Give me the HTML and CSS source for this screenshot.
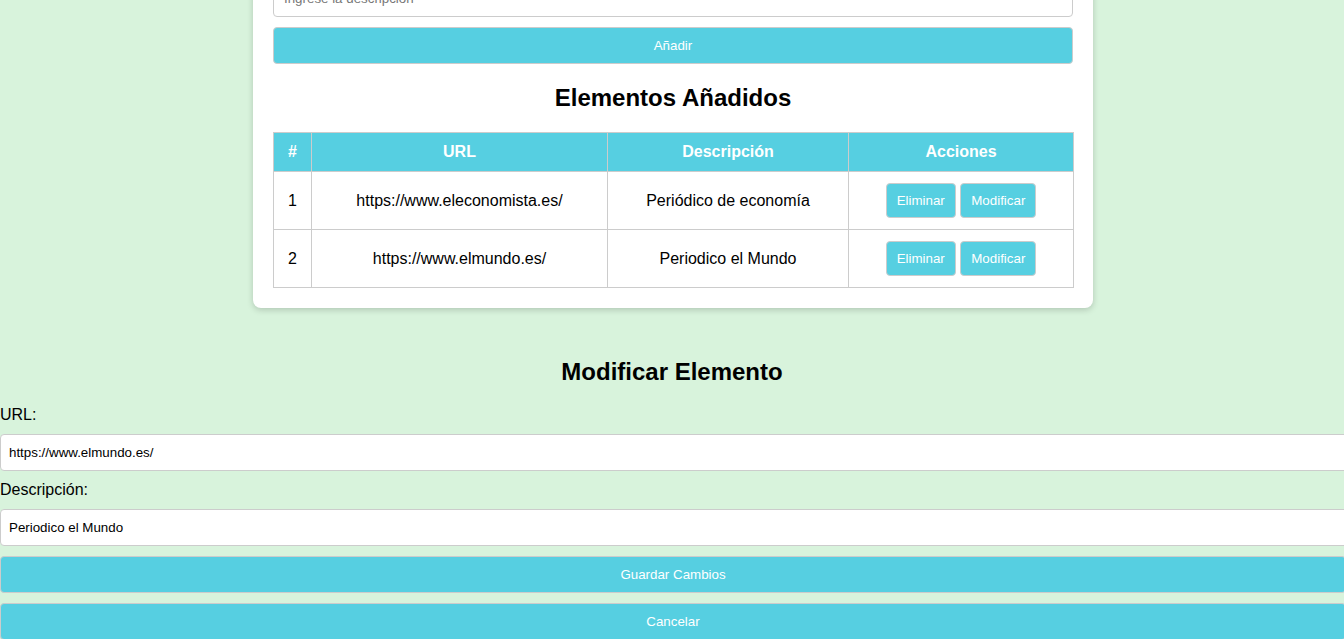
FILE: index.html
```html
<!DOCTYPE html>
<html lang="es">
<head>
<meta charset="utf-8">
<title>Elementos</title>
<link rel="stylesheet" href="styles.css">
</head>
<body>
<main class="page">
  <section class="card">
    <input class="field" type="text" placeholder="Ingrese la descripción">
    <button class="btn btn-block" type="button">Añadir</button>
    <h2 class="title">Elementos Añadidos</h2>
    <table class="items">
      <colgroup>
        <col class="c-num">
        <col class="c-url">
        <col class="c-desc">
        <col class="c-act">
      </colgroup>
      <thead>
        <tr><th>#</th><th>URL</th><th>Descripción</th><th>Acciones</th></tr>
      </thead>
      <tbody>
        <tr>
          <td>1</td>
          <td>https://www.eleconomista.es/</td>
          <td>Periódico de economía</td>
          <td><button class="btn btn-sm" type="button">Eliminar</button> <button class="btn btn-sm" type="button">Modificar</button></td>
        </tr>
        <tr>
          <td>2</td>
          <td>https://www.elmundo.es/</td>
          <td>Periodico el Mundo</td>
          <td><button class="btn btn-sm" type="button">Eliminar</button> <button class="btn btn-sm" type="button">Modificar</button></td>
        </tr>
      </tbody>
    </table>
  </section>

  <section class="edit">
    <h2 class="title">Modificar Elemento</h2>
    <label class="label" for="eurl">URL:</label>
    <input class="edit-field" id="eurl" type="text" value="https://www.elmundo.es/">
    <label class="label" for="edesc">Descripción:</label>
    <input class="edit-field" id="edesc" type="text" value="Periodico el Mundo">
    <button class="btn btn-full" type="button">Guardar Cambios</button>
    <button class="btn btn-full" type="button">Cancelar</button>
  </section>
</main>
</body>
</html>
```

FILE: styles.css
```css
html {
  overflow: hidden;
}

body {
  margin: 0;
  background: #d8f3dc;
  font-family: "Liberation Sans", Arial, sans-serif;
  font-size: 16px;
  color: #000;
  overflow: hidden;
}

.card {
  width: 800px;
  padding: 20px;
  margin: -40px 0 0 calc(50% - 419px);
  background: #fff;
  border-radius: 8px;
  box-shadow: 0 2px 6px rgba(0, 0, 0, 0.18);
}

.field {
  display: block;
  width: 100%;
  box-sizing: border-box;
  padding: 10px 10px;
  border: 1px solid #ccc;
  border-radius: 4px;
  font-family: "Liberation Sans", Arial, sans-serif;
  font-size: 13.333px;
}

.field::placeholder {
  color: #777;
}

.btn {
  background: #56cfe1;
  color: #fff;
  border: 1px solid #ccc;
  border-radius: 4px;
  font-family: "Liberation Sans", Arial, sans-serif;
  font-size: 13.333px;
  cursor: pointer;
}

.btn-block {
  display: block;
  width: 100%;
  box-sizing: border-box;
  margin-top: 10px;
  padding: 10px;
}

.title {
  margin: 20px 0;
  text-align: center;
  font-size: 24px;
  font-weight: bold;
}

.items {
  width: 100%;
  border-collapse: collapse;
  table-layout: fixed;
}

.c-num { width: 38px; }
.c-url { width: 296px; }
.c-desc { width: 241px; }
.c-act { width: 225px; }

.items th,
.items td {
  border: 1px solid #ccc;
  padding: 10px;
  text-align: center;
}

.items th {
  background: #56cfe1;
  color: #fff;
  font-weight: bold;
}

.btn-sm {
  padding: 9px 10px;
  margin: 1px 0;
}

.edit {
  padding-top: 30px;
}

.label {
  display: block;
  margin-bottom: 10px;
}

.edit-field {
  display: block;
  width: 100%;
  padding: 10px 8px;
  margin: 0 0 10px;
  border: 1px solid #ccc;
  border-radius: 4px;
  font-family: "Liberation Sans", Arial, sans-serif;
  font-size: 13.333px;
  color: #000;
}

.btn-full {
  display: block;
  width: calc(100% + 2px);
  box-sizing: border-box;
  padding: 10px;
  margin-bottom: 10px;
}
```
